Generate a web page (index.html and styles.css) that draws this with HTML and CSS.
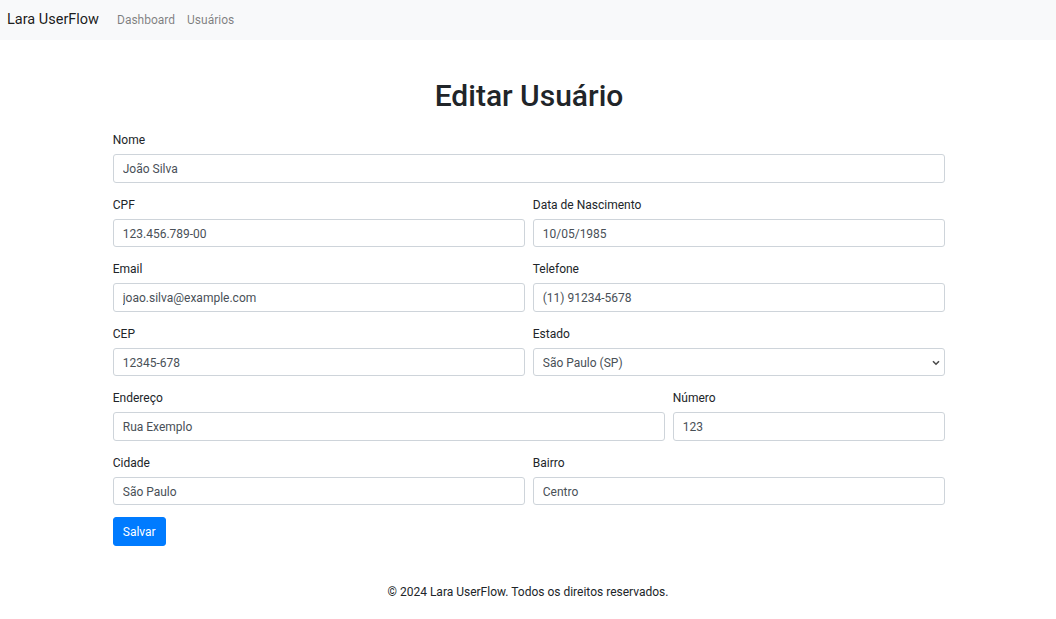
FILE: index.html
```html
<!DOCTYPE html>
<html lang="pt-BR">
<head>
<meta charset="utf-8">
<title>Editar Usuário - Lara UserFlow</title>
<link rel="stylesheet" href="styles.css">
</head>
<body>
<nav class="navbar">
  <a class="brand" href="#">Lara UserFlow</a>
  <ul class="nav">
    <li><a href="#">Dashboard</a></li>
    <li><a href="#">Usuários</a></li>
  </ul>
</nav>
<main class="container">
  <h1 class="title">Editar Usuário</h1>
  <form class="form">
    <div class="form-group">
      <label>Nome</label>
      <input class="control" type="text" value="João Silva">
    </div>
    <div class="form-row">
      <div class="form-group">
        <label>CPF</label>
        <input class="control" type="text" value="123.456.789-00">
      </div>
      <div class="form-group">
        <label>Data de Nascimento</label>
        <input class="control" type="text" value="10/05/1985">
      </div>
    </div>
    <div class="form-row">
      <div class="form-group">
        <label>Email</label>
        <input class="control" type="text" value="joao.silva@example.com">
      </div>
      <div class="form-group">
        <label>Telefone</label>
        <input class="control" type="text" value="(11) 91234-5678">
      </div>
    </div>
    <div class="form-row">
      <div class="form-group">
        <label>CEP</label>
        <input class="control" type="text" value="12345-678">
      </div>
      <div class="form-group">
        <label>Estado</label>
        <div class="select-wrap">
          <select class="control select">
            <option>São Paulo (SP)</option>
          </select>
          <svg class="chevron" width="8" height="6" viewBox="0 0 8 6" aria-hidden="true"><path d="M1 1.2 L4 4.2 L7 1.2" fill="none" stroke="#4a4a4a" stroke-width="1.6"/></svg>
        </div>
      </div>
    </div>
    <div class="form-row form-row-wide">
      <div class="form-group">
        <label>Endereço</label>
        <input class="control" type="text" value="Rua Exemplo">
      </div>
      <div class="form-group">
        <label>Número</label>
        <input class="control" type="text" value="123">
      </div>
    </div>
    <div class="form-row">
      <div class="form-group">
        <label>Cidade</label>
        <input class="control" type="text" value="São Paulo">
      </div>
      <div class="form-group">
        <label>Bairro</label>
        <input class="control" type="text" value="Centro">
      </div>
    </div>
    <button class="btn" type="button">Salvar</button>
  </form>
</main>
<footer class="footer">© 2024 Lara UserFlow. Todos os direitos reservados.</footer>
</body>
</html>
```
FILE: styles.css
```css
* { box-sizing: border-box; }
html, body { margin: 0; padding: 0; }
body {
  font-family: Roboto, "Liberation Sans", Arial, sans-serif;
  font-size: 12px;
  line-height: 18px;
  color: #212529;
  background: #fff;
}
.navbar {
  height: 40px;
  background: #f8f9fa;
  display: flex;
  align-items: center;
  padding: 0 7px;
}
.brand {
  font-size: 14.5px;
  line-height: 22px;
  color: rgba(0,0,0,.9);
  text-decoration: none;
  margin-right: 12px;
}
.nav {
  list-style: none;
  margin: 0;
  padding: 0;
  display: flex;
}
.nav a {
  display: block;
  padding: 0 6px;
  color: rgba(0,0,0,.5);
  text-decoration: none;
  font-size: 12px;
}
.container {
  max-width: 832.5px;
  margin: 0 auto;
  padding-top: 36px;
  position: relative;
  left: 1px;
}
.title {
  font-size: 30px;
  line-height: 36px;
  font-weight: 500;
  text-align: center;
  margin: 0 0 16px;
  padding-top: 2px;
}
.form-group { margin-bottom: 12px; min-width: 0; }
.form-group label {
  display: block;
  padding-top: 1px;
  margin-bottom: 5px;
}
.form-row {
  display: grid;
  grid-template-columns: 1fr 1fr;
  column-gap: 7.5px;
}
.form-row-wide {
  grid-template-columns: calc((100% + 7.5px) * 2 / 3 - 7.5px) 1fr;
}
.control {
  display: block;
  width: 100%;
  height: 28.5px;
  padding: 2px 9px 0;
  border: 1px solid #ced4da;
  border-radius: 3px;
  font-family: inherit;
  font-size: 12px;
  color: #495057;
  background: #fff;
  outline: none;
}
.select-wrap { position: relative; }
.select {
  appearance: none;
  -webkit-appearance: none;
  padding-right: 24px;
}
.chevron {
  position: absolute;
  right: 5px;
  top: 12px;
  pointer-events: none;
}
.btn {
  display: block;
  height: 28.5px;
  padding: 1px 9px 0;
  background: #007bff;
  border: 1px solid #007bff;
  border-radius: 3px;
  color: #fff;
  font-family: inherit;
  font-size: 12px;
  line-height: 18px;
  cursor: pointer;
}
.footer {
  text-align: center;
  margin-top: 37px;
  line-height: 18px;
}
```
